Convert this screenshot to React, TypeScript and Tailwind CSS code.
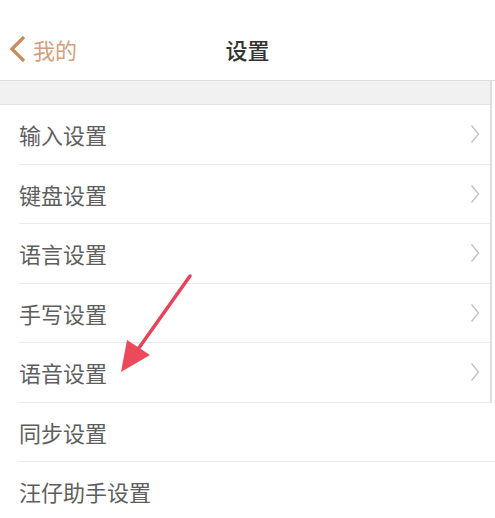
const font = { fontFamily: '"Noto Sans CJK SC", "Noto Sans", sans-serif' };

const framed = ["输入设置", "键盘设置", "语言设置", "手写设置", "语音设置"];
const plain = ["同步设置", "汪仔助手设置"];

const Row = ({ label, arrow }: { label: string; arrow: boolean }) => (
  <div className="h-[59.5px] pl-[19px] flex items-center">
    <div className="flex-1 h-full flex items-center border-b border-[#ebebeb]">
      <span className="text-[22px] leading-none text-[#5e5e5e]">{label}</span>
      <span className="flex-1" />
      {arrow && (
        <svg className="mr-[10px]" width="10" height="20" viewBox="0 0 10 20">
          <polyline points="1.5,1.5 8.5,10 1.5,18.5" fill="none" stroke="#c2c2c2" strokeWidth="1.4" />
        </svg>
      )}
    </div>
  </div>
);

const App = () => {
  return (
    <div className="relative w-[495px] h-[518px] overflow-hidden bg-white" style={font}>
      <header className="h-[81px] flex items-center relative border-b border-[#dcdcdc] pt-[18px]">
        <div className="flex items-center pl-[8px] gap-[5px]">
          <svg width="20" height="28" viewBox="0 0 20 28">
            <polyline points="16,2 4,14 16,26" fill="none" stroke="#c98a5c" strokeWidth="3.2" />
          </svg>
          <span className="text-[22px] leading-none text-[#d3a07c]">我的</span>
        </div>
        <h1 className="absolute left-0 right-0 text-center text-[22px] leading-none font-medium text-[#333]">
          设置
        </h1>
      </header>
      <div className="border-r-2 border-[#dedede] mr-[3px]">
        <div className="h-[24px] bg-[#f1f1f1] border-b border-[#e4e4e4]" />
        {framed.map((l) => (
          <Row key={l} label={l} arrow />
        ))}
      </div>
      {plain.map((l) => (
        <Row key={l} label={l} arrow={false} />
      ))}
      <svg className="absolute left-0 top-0 pointer-events-none" width="495" height="518">
        <line x1="190" y1="276" x2="136" y2="352" stroke="#e8435a" strokeWidth="3.5" strokeLinecap="round" />
        <polygon points="121,372 127,340 150,355" fill="#ec4a5a" />
      </svg>
    </div>
  );
};

export default App;
